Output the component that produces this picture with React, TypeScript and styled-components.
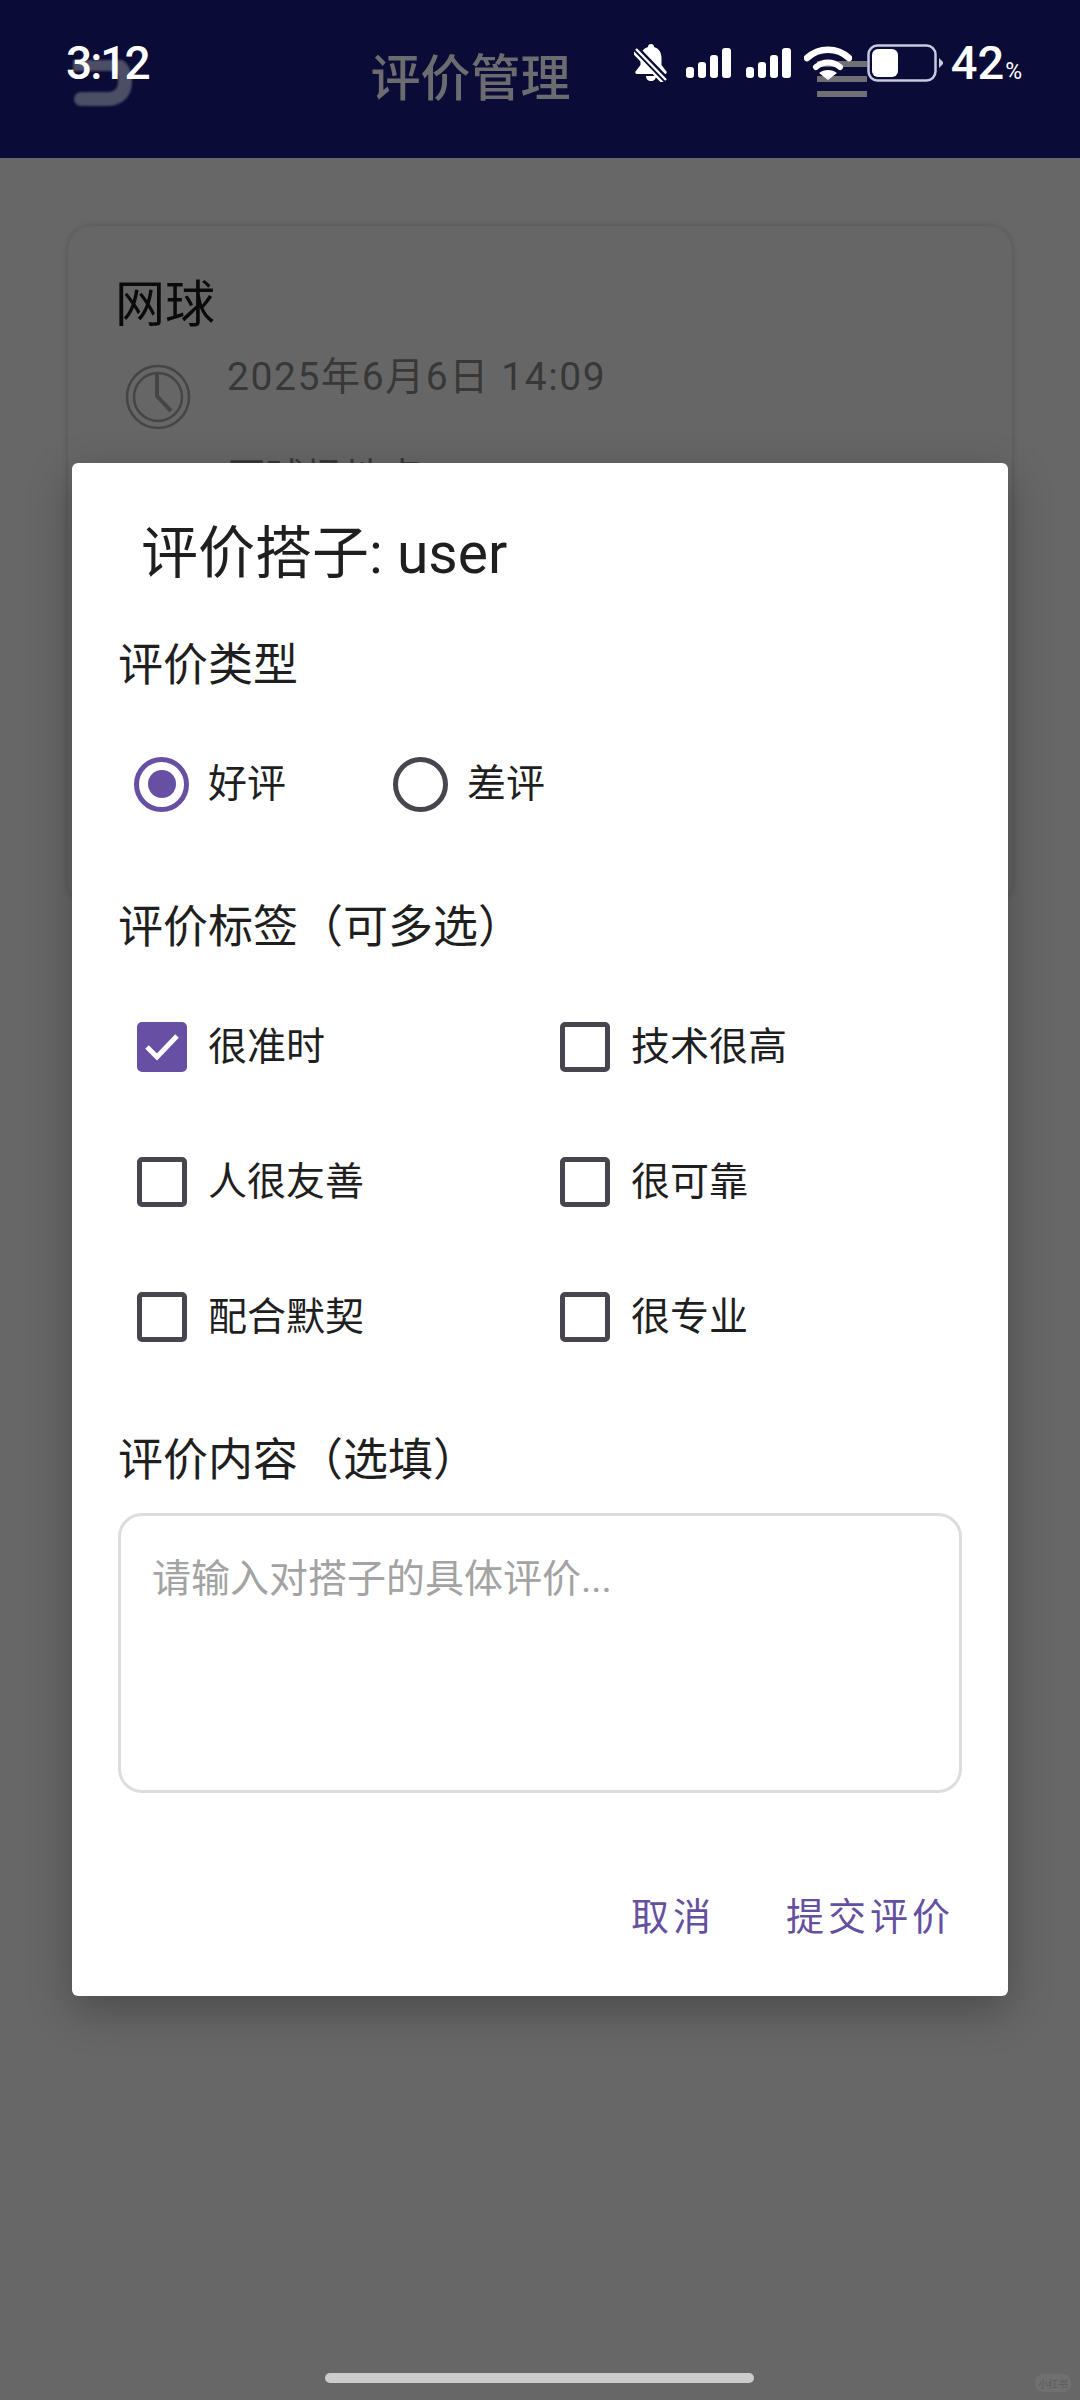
import styled, { createGlobalStyle } from 'styled-components';

const GlobalStyle = createGlobalStyle`
  html, body {
    margin: 0;
    padding: 0;
    background: #676767;
  }
  * {
    box-sizing: border-box;
  }
`;

const Page = styled.div`
  position: relative;
  width: 1080px;
  height: 2400px;
  overflow: hidden;
  background: #676767;
  font-family: Roboto, "Noto Sans CJK SC", sans-serif;
  color: #1f1f1f;
`;

const Header = styled.header`
  height: 158px;
  display: flex;
  align-items: center;
  justify-content: space-between;
  padding: 0 213px 0 73px;
  background: #0a0b36;
`;

const BackMark = styled.svg`
  width: 60px;
  height: 48px;
  margin-top: 10px;
  filter: blur(1px);
`;

const HeaderTitle = styled.h1`
  margin: 0 9px 0 0;
  font-size: 50px;
  font-weight: 500;
  line-height: 60px;
  color: #6c6c70;
`;

const MenuBars = styled.div`
  width: 50px;
  display: flex;
  flex-direction: column;
  gap: 9px;
`;

const MenuBar = styled.span`
  height: 6px;
  background: #6f6f75;
`;

const StatusBar = styled.div`
  position: absolute;
  top: 0;
  left: 0;
  right: 0;
  height: 126px;
  display: flex;
  align-items: center;
  justify-content: space-between;
  padding: 0 58px 0 66px;
  color: #fff;
`;

const Time = styled.span`
  font-size: 46px;
  font-weight: 500;
  letter-spacing: -2px;
`;

const StatusIcons = styled.div`
  display: flex;
  align-items: center;
`;

const Percent = styled.span`
  margin: 8px 0 0 8px;
  font-size: 47px;
  font-weight: 500;
  line-height: 46px;
`;

const PercentSign = styled.span`
  margin-left: 1px;
  font-size: 23px;
  font-weight: 400;
`;

const Body = styled.main`
  padding: 68px 68px 0;
`;

const Card = styled.section`
  height: 679px;
  padding: 49px 47px 0;
  border-radius: 24px;
  background: #666;
  box-shadow: 0 0 6px rgba(0, 0, 0, 0.18);
`;

const CardTitle = styled.h2`
  margin: 0;
  font-size: 50px;
  font-weight: 400;
  line-height: 60px;
  color: #0a0a0a;
`;

const CardRow = styled.div`
  display: flex;
  align-items: flex-start;
  margin-top: 14px;
`;

const ClockIcon = styled.svg`
  width: 66px;
  height: 66px;
  margin: 15px 0 0 10px;
  flex-shrink: 0;
`;

const CardText = styled.span`
  margin-left: 36px;
  font-size: 39px;
  line-height: 56px;
  letter-spacing: 1.6px;
  color: #383838;
`;

const CardPlace = styled.div`
  margin: 20px 0 0 112px;
  font-size: 39px;
  line-height: 56px;
  color: #383838;
`;

const Dialog = styled.div`
  position: absolute;
  top: 463px;
  left: 72px;
  width: 936px;
  height: 1533px;
  padding: 61px 46px 54px;
  border-radius: 6px;
  background: #fff;
  box-shadow: 0 14px 44px rgba(0, 0, 0, 0.28);
`;

const DialogTitle = styled.h2`
  margin: 0 0 0 23px;
  font-size: 57px;
  font-weight: 400;
  line-height: 60px;
  color: #1f1f1f;
`;

const SectionLabel = styled.div<{ $top: number }>`
  margin-top: ${(p) => p.$top}px;
  font-size: 45px;
  line-height: 50px;
  color: #1f1f1f;
`;

const RadioGroup = styled.div`
  display: flex;
  gap: 107px;
  margin-top: 65px;
  padding-left: 16px;
`;

const Option = styled.label`
  display: flex;
  align-items: center;
  font-size: 39px;
  line-height: 56px;
  color: #1f1f1f;
`;

const RadioMark = styled.span<{ $on?: boolean }>`
  width: 55px;
  height: 55px;
  margin-right: 19px;
  display: flex;
  align-items: center;
  justify-content: center;
  border-radius: 50%;
  border: 5px solid ${(p) => (p.$on ? '#6750a4' : '#49454f')};

  &::after {
    content: '';
    display: ${(p) => (p.$on ? 'block' : 'none')};
    width: 28px;
    height: 28px;
    border-radius: 50%;
    background: #6750a4;
  }
`;

const TagGrid = styled.div`
  display: grid;
  grid-template-columns: 423px 1fr;
  row-gap: 85px;
  margin-top: 69px;
  padding-left: 19px;
`;

const TagOption = styled(Option)`
  line-height: 50px;
`;

const CheckMark = styled.span<{ $on?: boolean }>`
  width: 50px;
  height: 50px;
  margin-right: 21px;
  display: flex;
  align-items: center;
  justify-content: center;
  border-radius: 5px;
  border: 5px solid ${(p) => (p.$on ? '#6750a4' : '#49454f')};
  background: ${(p) => (p.$on ? '#6750a4' : 'transparent')};
`;

const CommentBox = styled.textarea`
  display: block;
  width: 100%;
  height: 280px;
  margin-top: 27px;
  padding: 38px 31px;
  border: 3px solid #ddd;
  border-radius: 24px;
  outline: none;
  resize: none;
  background: #fff;
  font-family: inherit;
  font-size: 39px;
  line-height: 50px;

  &::placeholder {
    color: #a3a3a3;
    opacity: 1;
  }
`;

const Actions = styled.div`
  display: flex;
  justify-content: flex-end;
  gap: 71px;
  margin-top: 99px;
  padding-right: 8px;
`;

const ActionButton = styled.button`
  padding: 0;
  border: none;
  background: none;
  font-family: inherit;
  font-size: 38px;
  line-height: 50px;
  letter-spacing: 4px;
  color: #65509f;
`;

const HomeBar = styled.div`
  position: absolute;
  left: 325px;
  top: 2373px;
  width: 429px;
  height: 10px;
  border-radius: 5px;
  background: #ccc;
`;

const Watermark = styled.div`
  position: absolute;
  left: 1035px;
  top: 2374px;
  width: 36px;
  height: 18px;
  display: flex;
  align-items: center;
  justify-content: center;
  border-radius: 8px;
  background: #707070;
  font-size: 10px;
  color: #5c5c5c;
`;

const tags = [
  { label: '很准时', on: true },
  { label: '技术很高' },
  { label: '人很友善' },
  { label: '很可靠' },
  { label: '配合默契' },
  { label: '很专业' },
];

const SignalIcon = ({ style }: { style?: React.CSSProperties }) => (
  <svg width="45" height="30" viewBox="0 0 45 30" style={style}>
    <rect x="0" y="19" width="8" height="11" rx="3" fill="#fff" />
    <rect x="12" y="14" width="8" height="16" rx="3" fill="#fff" />
    <rect x="24" y="7" width="8" height="23" rx="3" fill="#fff" />
    <rect x="36" y="0" width="9" height="30" rx="3" fill="#fff" />
  </svg>
);

const BellOffIcon = () => (
  <svg width="34" height="38" viewBox="0 0 34 38">
    <path
      d="M17 0c2 0 3 1.2 3 3 5 1.500 7.500 5.500 7.500 11v7l5 6.500c.6 1 0 2.500-1.500 2.500H3c-1.500 0-2.100-1.500-1.500-2.500L6.500 21v-7C6.500 8.500 9 4.500 14 3c0-1.800 1-3 3-3z"
      fill="#fff"
    />
    <path d="M12 32h10c0 3-2 5-5 5s-5-2-5-5z" fill="#fff" />
    <path d="M1 4 31 35" stroke="#0a0b36" strokeWidth="7" />
    <path d="M2 5l30 31M-1 8l30 31" stroke="#fff" strokeWidth="2.400" />
  </svg>
);

const WifiIcon = () => (
  <svg width="48" height="34" viewBox="0 0 48 34" style={{ margin: '0 15px 0 13px' }}>
    <path d="M3 12C15 1 33 1 45 12" stroke="#fff" strokeWidth="6.500" fill="none" strokeLinecap="round" />
    <path d="M12 21c7-6 17-6 24 0" stroke="#fff" strokeWidth="6" fill="none" strokeLinecap="round" />
    <path d="M15 27c5-4 13-4 18 0l-9 7z" fill="#fff" />
  </svg>
);

const BatteryIcon = () => (
  <svg width="76" height="38" viewBox="0 0 76 38">
    <rect x="1.500" y="1.500" width="67" height="35" rx="9" fill="none" stroke="#c8cae0" strokeWidth="2.500" />
    <rect x="5" y="5" width="26" height="28" rx="6" fill="#fff" />
    <path d="M72 14l4 4v2l-4 4z" fill="#c8cae0" />
  </svg>
);

export default function App() {
  return (
    <Page lang="zh-CN">
      <GlobalStyle />
      <Header>
        <BackMark viewBox="0 0 60 48">
          <path
            d="M0 4H38C50 4 52 14 52 22C52 32 46 39 34 39H8"
            fill="none"
            stroke="#4c4e66"
            strokeWidth="14"
            strokeLinecap="round"
          />
        </BackMark>
        <HeaderTitle>评价管理</HeaderTitle>
        <MenuBars>
          <MenuBar />
          <MenuBar />
          <MenuBar />
        </MenuBars>
      </Header>

      <Body>
        <Card>
          <CardTitle>网球</CardTitle>
          <CardRow>
            <ClockIcon viewBox="0 0 66 66" fill="none" stroke="#454545">
              <circle cx="33" cy="33" r="31" strokeWidth="2.500" />
              <circle cx="33" cy="33" r="24" strokeWidth="2.500" />
              <path d="M32 10V32L46 47" strokeWidth="4" />
            </ClockIcon>
            <CardText>2025年6月6日 14:09</CardText>
          </CardRow>
          <CardPlace>网球场地点</CardPlace>
        </Card>
      </Body>

      <Dialog>
        <DialogTitle>评价搭子: user</DialogTitle>

        <SectionLabel $top={57}>评价类型</SectionLabel>
        <RadioGroup>
          <Option>
            <RadioMark $on />
            好评
          </Option>
          <Option>
            <RadioMark />
            差评
          </Option>
        </RadioGroup>

        <SectionLabel $top={91}>评价标签（可多选）</SectionLabel>
        <TagGrid>
          {tags.map((tag) => (
            <TagOption key={tag.label}>
              <CheckMark $on={tag.on}>
                {tag.on && (
                  <svg width="36" height="30" viewBox="0 0 36 30">
                    <path d="M3 15l10 10L33 4" fill="none" stroke="#fff" strokeWidth="5" />
                  </svg>
                )}
              </CheckMark>
              {tag.label}
            </TagOption>
          ))}
        </TagGrid>

        <SectionLabel $top={94}>评价内容（选填）</SectionLabel>
        <CommentBox placeholder="请输入对搭子的具体评价..." />

        <Actions>
          <ActionButton>取消</ActionButton>
          <ActionButton>提交评价</ActionButton>
        </Actions>
      </Dialog>

      <StatusBar>
        <Time>3:12</Time>
        <StatusIcons>
          <BellOffIcon />
          <SignalIcon style={{ marginLeft: 18 }} />
          <SignalIcon style={{ marginLeft: 15 }} />
          <WifiIcon />
          <BatteryIcon />
          <Percent>
            42<PercentSign>%</PercentSign>
          </Percent>
        </StatusIcons>
      </StatusBar>

      <HomeBar />
      <Watermark>小红书</Watermark>
    </Page>
  );
}
